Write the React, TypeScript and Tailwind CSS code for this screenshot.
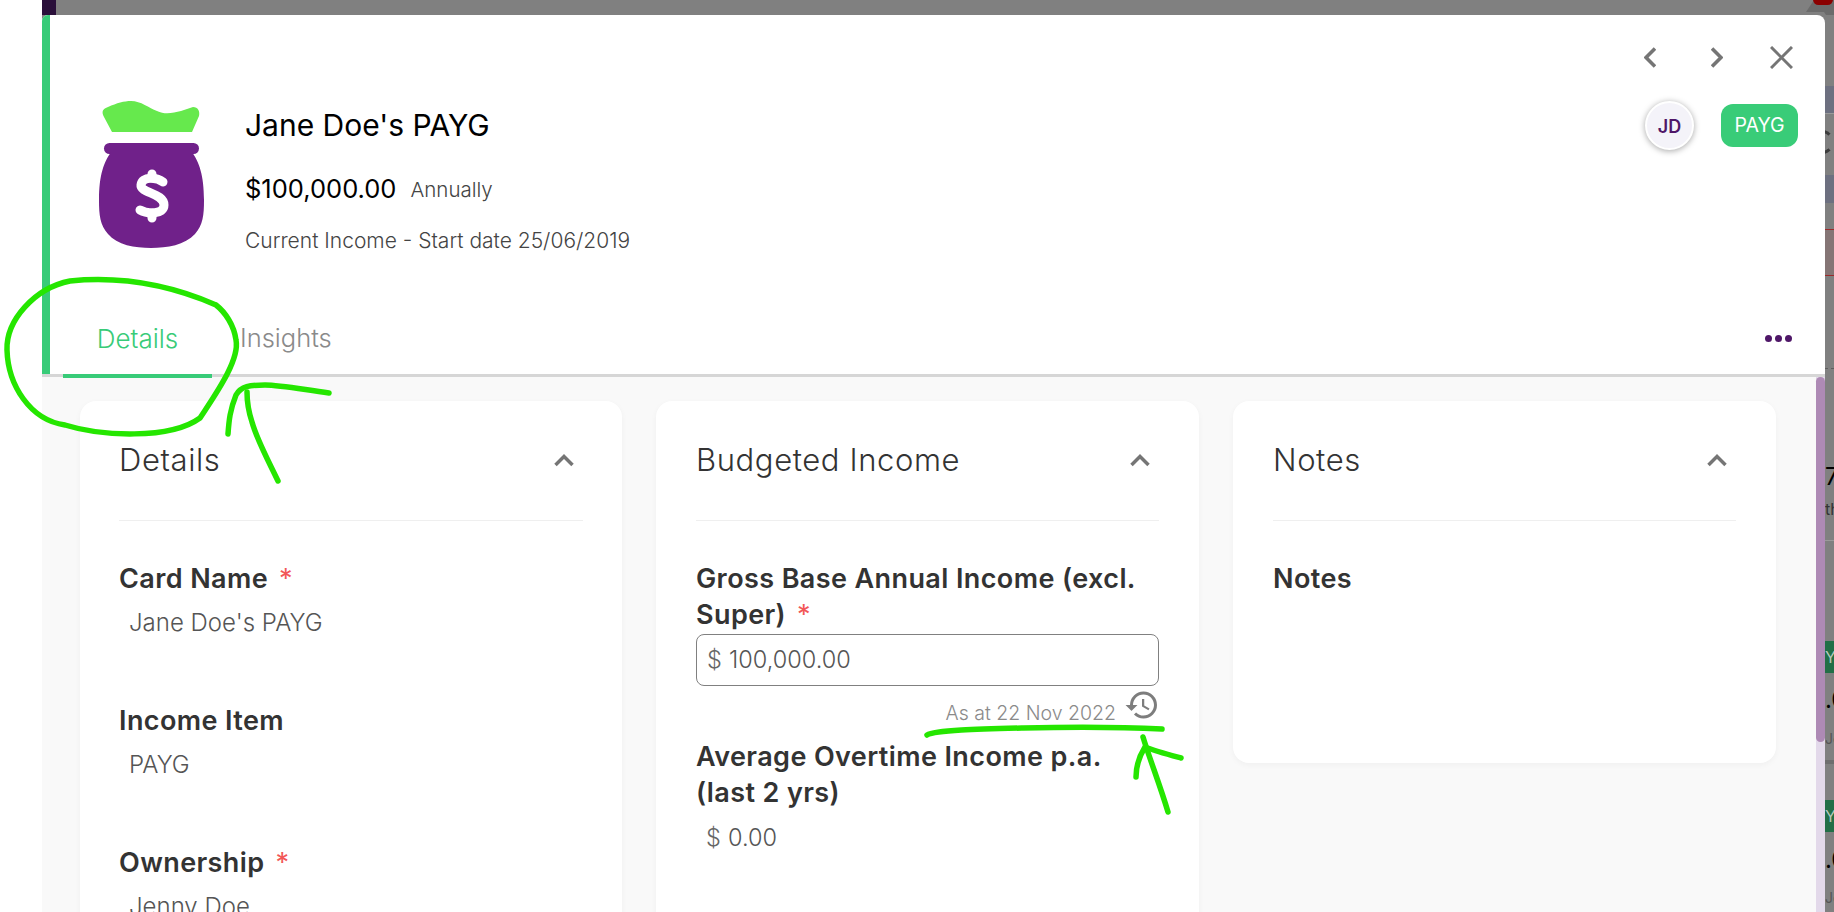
import React from 'react';
import { MdHistory } from 'react-icons/md';

const font = { fontFamily: 'Inter, "Open Sans", sans-serif' };

const MoneyBag = () => (
  <svg width="105" height="148" viewBox="0 0 105 148" className="shrink-0">
    <path d="M13 32 L5 17 C2 11 4 9 9 7 C18 3 25 1 32 1 C42 1 50 8 58 11 C66 15 74 13 82 11 L94 7 C99 7 101 11 100 16 L93 32 Z" fill="#66e94d" />
    <rect x="5" y="43" width="95" height="11" rx="5.5" fill="#70218a" />
    <path d="M12 52 H93 C100 62 105 75 105 100 C105 115 104 125 96 134 C86 145 68 148 52 148 C36 148 18 145 9 134 C1 125 0 115 0 100 C0 75 5 62 12 52 Z" fill="#70218a" />
    <path d="M64 82 C58 77 43 76 42 85 C41 93 65 93 65 105 C65 115 48 114 41 110" fill="none" stroke="#fff" strokeWidth="9" strokeLinecap="round" />
    <path d="M53 74 V78 M53 113 V118" fill="none" stroke="#fff" strokeWidth="9" strokeLinecap="round" />
  </svg>
);

const ChevronUp = () => (
  <svg width="20" height="13" viewBox="0 0 20 13" className="shrink-0">
    <polyline points="1.5,11 10,2.5 18.5,11" fill="none" stroke="#757575" strokeWidth="3.5" />
  </svg>
);

const Label = ({ text, required }: { text: string; required?: boolean }) => (
  <div className="text-[27px] leading-[36px] font-semibold text-[#333] tracking-[0.4px]">
    {text}
    {required && <span className="ml-[11px] font-normal text-[#f25757]">*</span>}
  </div>
);

const Value = ({ children }: { children: React.ReactNode }) => (
  <div className="mt-[8px] pl-[10px] h-[36px] text-[24px] leading-[36px] font-light text-[#555]">{children}</div>
);

const Card = ({ title, className, children }: { title: string; className: string; children: React.ReactNode }) => (
  <div className={`bg-white rounded-2xl shadow-[0_2px_6px_rgba(0,0,0,0.04)] shrink-0 ${className}`}>
    <div className="h-[120px] flex items-center justify-between border-b border-[#efefef] pr-[9px]">
      <div className="text-[31px] font-light text-[#333] tracking-[0.6px]">{title}</div>
      <ChevronUp />
    </div>
    {children}
  </div>
);

export default function App() {
  return (
    <div style={font} className="relative w-[1834px] h-[912px] overflow-hidden flex bg-white">
      <div className="w-[42px] shrink-0" />

      <div className="flex-1 flex flex-col bg-[#808080]">
        <div className="h-[15px] shrink-0">
          <div className="w-[14px] h-full bg-[#2a0f3a]" />
        </div>

        <div className="flex-1 flex min-h-0">
          {/* Modal */}
          <div className="w-[1783px] flex flex-col bg-white rounded-tr-lg rounded-tl-md overflow-hidden shrink-0">
            <div className="h-[359px] shrink-0 flex flex-col border-l-[8px] border-[#38cb78]">
              <div className="flex-1 flex justify-between">
                <div className="pl-[49px] pt-[85px] flex gap-[41px]">
                  <MoneyBag />
                  <div className="pt-[5px]">
                    <div className="h-[40px] text-[30px] leading-[40px] text-black">Jane Doe's PAYG</div>
                    <div className="mt-[28px] h-[32px] flex items-center gap-[14px]">
                      <span className="text-[25.5px] text-black">$100,000.00</span>
                      <span className="text-[20.5px] font-light text-[#444] mt-[2px]">Annually</span>
                    </div>
                    <div className="mt-[21px] h-[30px] text-[21px] leading-[30px] font-light text-[#444]">
                      Current Income - Start date 25/06/2019
                    </div>
                  </div>
                </div>

                <div className="pr-[27px] pt-[31px] flex flex-col items-end">
                  <div className="h-[22px] flex items-center gap-[55px] pr-[5px]">
                    <svg width="12" height="21" viewBox="0 0 12 21">
                      <polyline points="11,1.5 2,10.5 11,19.5" fill="none" stroke="#757575" strokeWidth="3.6" />
                    </svg>
                    <div className="flex items-center gap-[47px]">
                      <svg width="12" height="21" viewBox="0 0 12 21">
                        <polyline points="1,1.5 10,10.5 1,19.5" fill="none" stroke="#757575" strokeWidth="3.6" />
                      </svg>
                      <svg width="23" height="23" viewBox="0 0 23 23">
                        <path d="M1 1 L22 22 M22 1 L1 22" fill="none" stroke="#757575" strokeWidth="3" />
                      </svg>
                    </div>
                  </div>
                  <div className="mt-[36px] h-[43px] flex items-center gap-[27px]">
                    <div className="w-[49px] h-[49px] rounded-full bg-[#f4f3f9] border-[2px] border-white shadow-[0_1px_6px_rgba(0,0,0,0.35)] flex items-center justify-center text-[18px] font-semibold text-[#4f1768] pt-[2px]">
                      JD
                    </div>
                    <div className="w-[77px] h-[43px] rounded-xl bg-[#39cc78] flex items-center justify-center text-[19.5px] text-white">
                      PAYG
                    </div>
                  </div>
                </div>
              </div>

              <div className="h-[72px] shrink-0 flex pl-[13px] pr-[33px]">
                <div className="relative z-10 w-[149px] h-[76px] border-b-[4px] border-[#38cb78] flex items-center justify-center text-[26px] font-light text-[#38cb78]">
                  Details
                </div>
                <div className="ml-[28px] h-[72px] flex items-center text-[25.5px] font-light text-[#8a8a8a]">Insights</div>
                <div className="ml-auto flex items-center gap-[3px]">
                  <div className="w-[7px] h-[7px] rounded-full bg-[#4f1768]" />
                  <div className="w-[7px] h-[7px] rounded-full bg-[#4f1768]" />
                  <div className="w-[7px] h-[7px] rounded-full bg-[#4f1768]" />
                </div>
              </div>
            </div>
            <div className="h-[3px] shrink-0 bg-[#d6d6d6]" />

            <div className="flex-1 min-h-0 flex bg-[#f9f9f9] overflow-hidden">
              <div className="flex-1 pl-[38px] pt-[24px] flex items-start gap-[34px]">
                <Card title="Details" className="w-[542px] h-[700px] px-[39px]">
                  <div className="pt-[40px]">
                    <Label text="Card Name" required />
                    <Value>Jane Doe's PAYG</Value>
                  </div>
                  <div className="pt-[62px]">
                    <Label text="Income Item" />
                    <Value>PAYG</Value>
                  </div>
                  <div className="pt-[62px]">
                    <Label text="Ownership" required />
                    <Value>Jenny Doe</Value>
                  </div>
                </Card>

                <Card title="Budgeted Income" className="w-[543px] h-[700px] pl-[40px] pr-[40px]">
                  <div className="pt-[40px]">
                    <Label text="Gross Base Annual Income (excl." />
                    <Label text="Super)" required />
                    <div className="mt-[1px] h-[52px] rounded-lg border border-[#808080] flex items-center pl-[10px] text-[23.5px] font-light text-[#555]">
                      <span className="w-[22px] text-[#666]">$</span>
                      <span>100,000.00</span>
                    </div>
                    <div className="h-[53px] flex items-start justify-end gap-[8px]">
                      <span className="mt-[13px] text-[19.5px] leading-[28px] font-light text-[#8a8a8a]">As at 22 Nov 2022</span>
                      <MdHistory size={36} color="#7d7d7d" className="mt-[1px] -mr-[1px]" />
                    </div>
                    <Label text="Average Overtime Income p.a." />
                    <Label text="(last 2 yrs)" />
                    <div className="mt-[9px] pl-[10px] h-[36px] flex items-center text-[23.5px] font-light text-[#555]">
                      <span className="w-[22px] text-[#666]">$</span>
                      <span>0.00</span>
                    </div>
                  </div>
                </Card>

                <Card title="Notes" className="w-[543px] h-[362px] px-[40px]">
                  <div className="pt-[40px]">
                    <Label text="Notes" />
                  </div>
                </Card>
              </div>

              {/* Scrollbar */}
              <div className="w-[9px] shrink-0 bg-[#e3d9ea]">
                <div className="h-[365px] rounded-full bg-[#ae8ab5]" />
              </div>
            </div>
          </div>

          {/* Dimmed page behind the modal */}
          <div className="relative flex-1 overflow-hidden text-black">
            <div className="absolute left-0 right-0 top-[71px] h-[27px] bg-[#6d7080]" />
            <div className="absolute left-0 right-0 top-[98px] h-px bg-[#9a9a9a]" />
            <div className="absolute -left-[15px] top-[115px] w-[24px] h-[24px] rounded-full border-[3px] border-[#3d3d3d] border-r-transparent" />
            <div className="absolute left-0 right-0 top-[160px] h-[28px] bg-[#6d7080]" />
            <div className="absolute left-0 right-0 top-[214px] h-[47px] border-y border-[#9c2a2a] bg-[#857575]" />
            <div className="absolute left-0 right-0 top-[353px] border-t border-dashed border-[#5e5e5e]" />
            <div className="absolute left-0 top-[450px] text-[24px] leading-[24px]">7</div>
            <div className="absolute left-0 top-[485px] text-[16px] leading-[18px] text-[#333]">th</div>
            <div className="absolute left-0 right-0 top-[525px] h-px bg-[#9a9a9a]" />
            <div className="absolute left-0 right-0 top-[626px] h-[32px] bg-[#226f47] text-[16px] leading-[32px] text-[#b5c9bc]">Yo</div>
            <div className="absolute left-0 top-[672px] text-[24px] leading-[26px]">.0</div>
            <div className="absolute left-0 top-[716px] text-[14px] leading-[16px] text-[#555]">Jo</div>
            <div className="absolute left-0 right-0 top-[745px] h-[4px] bg-[#6e6e6e]" />
            <div className="absolute left-0 right-0 top-[785px] h-[32px] bg-[#226f47] text-[16px] leading-[32px] text-[#b5c9bc]">Yo</div>
            <div className="absolute left-0 top-[832px] text-[24px] leading-[26px]">.0</div>
            <div className="absolute left-0 top-[875px] text-[14px] leading-[16px] text-[#555]">Jo</div>
          </div>
        </div>
      </div>

      {/* Notification badge peeking in at the top right */}
      <svg className="absolute left-[1806px] top-0" width="28" height="15" viewBox="0 0 28 15">
        <polygon points="0,12 8,0 28,0 28,15 20,15 18,12" fill="#6b6b6b" />
      </svg>
      <div className="absolute left-[1813px] -top-[6px] w-[20px] h-[11px] rounded-full bg-[#8b0000]" />

      {/* Hand-drawn annotations */}
      <svg className="absolute inset-0 pointer-events-none" width="1834" height="912" viewBox="0 0 1834 912" fill="none" stroke="#25e600" strokeWidth="5.5" strokeLinecap="round" strokeLinejoin="round">
        <path d="M216 305 C170 285 120 276 70 281 C35 288 6 320 7 350 C8 385 30 420 65 425 C100 436 170 440 200 418 C215 395 240 360 236 340 C234 325 225 312 216 305" />
        <path d="M329 393 C300 389 280 385 265 385 C250 385 241 386 236 395 C230 410 229 420 228 434" />
        <path d="M247 392 C247 402 248 410 252 422 C257 440 268 460 278 481" />
        <path d="M927 735 C935 730 980 729 1023 728 C1070 727 1120 727 1162 729" />
        <path d="M1136 777 C1136 765 1140 755 1145 747 C1155 751 1170 755 1181 758" />
        <path d="M1143 737 C1150 760 1160 785 1168 812" />
      </svg>
    </div>
  );
}
